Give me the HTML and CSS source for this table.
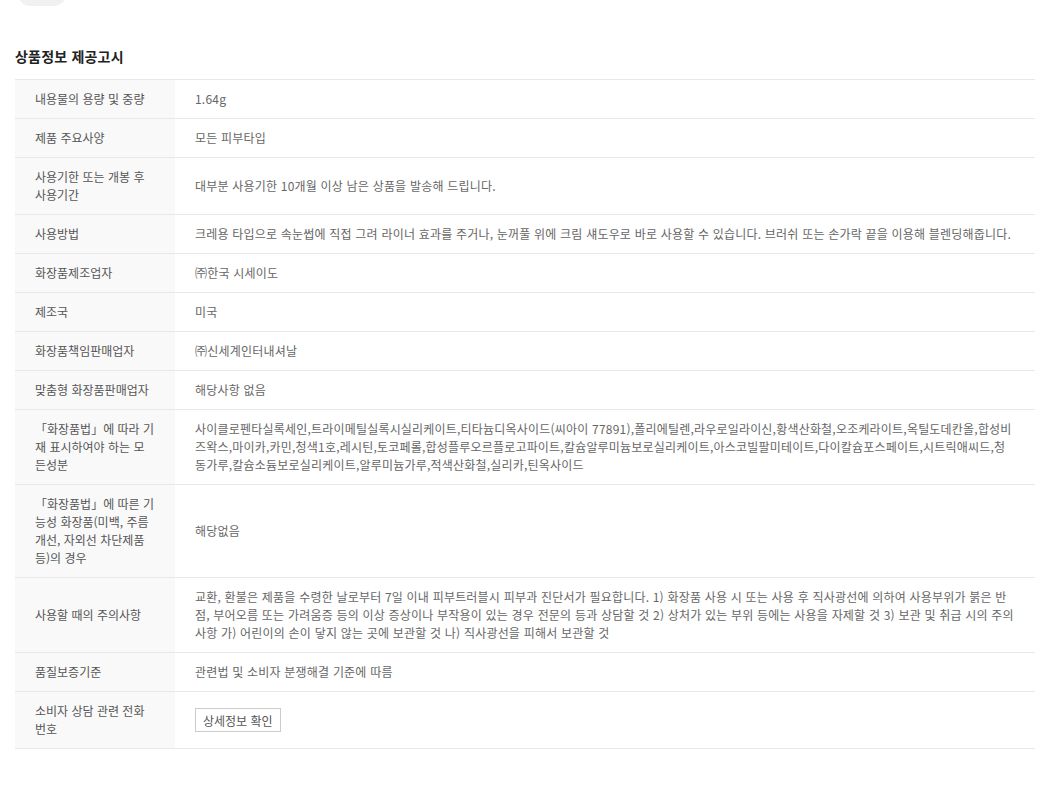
FILE: index.html
```html
<!DOCTYPE html>
<html lang="ko">
<head>
    <meta charset="UTF-8">
    <meta name="viewport" content="width=device-width, initial-scale=1.0">
    <title>상품정보 제공고시</title>
    <link rel="stylesheet" href="styles.css">
</head>
<body>

<div class="page">
    <div class="top-tab"></div>

    <h3 class="notice-title">상품정보 제공고시</h3>

    <table class="notice-table">
        <tbody>
            <tr>
                <th>내용물의 용량 및 중량</th>
                <td>1.64g</td>
            </tr>
            <tr>
                <th>제품 주요사양</th>
                <td>모든 피부타입</td>
            </tr>
            <tr>
                <th>사용기한 또는 개봉 후 사용기간</th>
                <td>대부분 사용기한 10개월 이상 남은 상품을 발송해 드립니다.</td>
            </tr>
            <tr>
                <th>사용방법</th>
                <td>크레용 타입으로 속눈썹에 직접 그려 라이너 효과를 주거나, 눈꺼풀 위에 크림 섀도우로 바로 사용할 수 있습니다. 브러쉬 또는 손가락 끝을 이용해 블렌딩해줍니다.</td>
            </tr>
            <tr>
                <th>화장품제조업자</th>
                <td>㈜한국 시세이도</td>
            </tr>
            <tr>
                <th>제조국</th>
                <td>미국</td>
            </tr>
            <tr>
                <th>화장품책임판매업자</th>
                <td>㈜신세계인터내셔날</td>
            </tr>
            <tr>
                <th>맞춤형 화장품판매업자</th>
                <td>해당사항 없음</td>
            </tr>
            <tr>
                <th>「화장품법」에 따라 기재 표시하여야 하는 모든성분</th>
                <td>사이클로펜타실록세인,트라이메틸실록시실리케이트,티타늄디옥사이드(씨아이 77891),폴리에틸렌,라우로일라이신,황색산화철,오조케라이트,옥틸도데칸올,합성비즈왁스,마이카,카민,청색1호,레시틴,토코페롤,합성플루오르플로고파이트,칼슘알루미늄보로실리케이트,아스코빌팔미테이트,다이칼슘포스페이트,시트릭애씨드,청동가루,칼슘소듐보로실리케이트,알루미늄가루,적색산화철,실리카,틴옥사이드</td>
            </tr>
            <tr>
                <th>「화장품법」에 따른 기능성 화장품(미백, 주름개선, 자외선 차단제품 등)의 경우</th>
                <td>해당없음</td>
            </tr>
            <tr>
                <th>사용할 때의 주의사항</th>
                <td>교환, 환불은 제품을 수령한 날로부터 7일 이내 피부트러블시 피부과 진단서가 필요합니다. 1) 화장품 사용 시 또는 사용 후 직사광선에 의하여 사용부위가 붉은 반점, 부어오름 또는 가려움증 등의 이상 증상이나 부작용이 있는 경우 전문의 등과 상담할 것 2) 상처가 있는 부위 등에는 사용을 자제할 것 3) 보관 및 취급 시의 주의사항 가) 어린이의 손이 닿지 않는 곳에 보관할 것 나) 직사광선을 피해서 보관할 것</td>
            </tr>
            <tr>
                <th>품질보증기준</th>
                <td>관련법 및 소비자 분쟁해결 기준에 따름</td>
            </tr>
            <tr>
                <th>소비자 상담 관련 전화번호</th>
                <td><button type="button" class="detail-button">상세정보 확인</button></td>
            </tr>
        </tbody>
    </table>
</div>

</body>
</html>
```

FILE: styles.css
```css
body, html {
    margin: 0;
    padding: 0;
    background-color: #fff;
    color: #333;
    font-family: "Malgun Gothic", "Noto Sans CJK KR", "Noto Sans", sans-serif;
}
.page {
    padding: 0 21px 40px 15px;
}
.top-tab {
    width: 50px;
    height: 30px;
    margin: -24px 0 0 2px;
    border-radius: 14px;
    background-color: #f1f1f1;
}
.notice-title {
    margin: 40px 0 13px;
    font-size: 14px;
    line-height: 20px;
    font-weight: bold;
    color: #222;
    letter-spacing: 0.2px;
}
.notice-table {
    width: 100%;
    border-collapse: collapse;
    border-top: 1px solid #e8e8e8;
    font-size: 12px;
    line-height: 18px;
}
.notice-table tr {
    border-bottom: 1px solid #e8e8e8;
}
.notice-table th {
    width: 120px;
    padding: 10px 20px;
    background-color: #f9f9f9;
    color: #555;
    font-weight: normal;
    text-align: left;
    vertical-align: middle;
}
.notice-table td {
    padding: 10px 20px;
    color: #666;
    vertical-align: middle;
    letter-spacing: 0.2px;
}
.detail-button {
    height: 24px;
    padding: 0 7px;
    border: 1px solid #ccc;
    background-color: #fff;
    color: #555;
    font-family: inherit;
    font-size: 12px;
    cursor: pointer;
}
```
